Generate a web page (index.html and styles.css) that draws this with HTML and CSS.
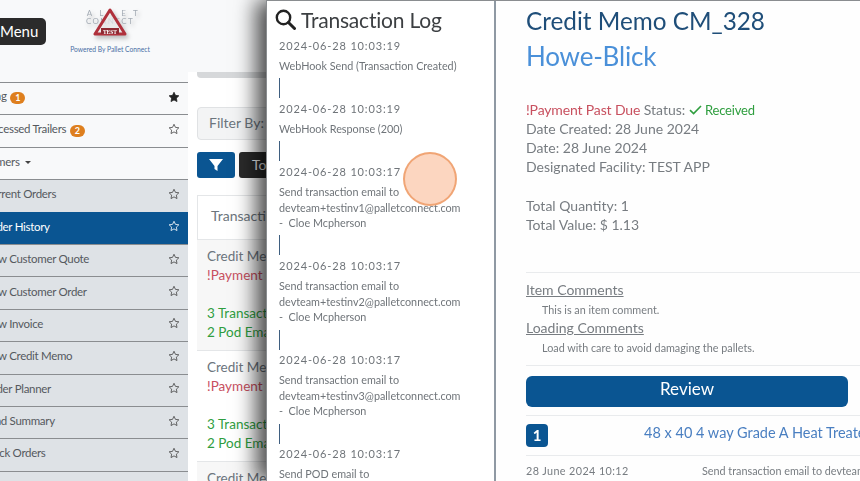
FILE: index.html
```html
<!DOCTYPE html>
<html>
<head>
<meta name="viewport" content="width=device-width, initial-scale=1">
<link rel="stylesheet" href="styles.css">
</head>
<body>

<svg class="defs" width="0" height="0">
  <symbol id="star" viewBox="0 0 24 24">
    <path d="M12 2.5l2.9 6.2 6.8.9-5 4.7 1.3 6.8-6-3.3-6 3.3 1.3-6.8-5-4.7 6.8-.9z"/>
  </symbol>
</svg>

<div class="page">

  <!-- Left column -->
  <div class="side">
    <div class="side-top">
      <div class="menu-btn">Menu</div>
      <div class="logo">
        <svg class="logo-mark" width="60" height="36" viewBox="0 0 60 36">
          <text class="logo-word" x="30" y="12" text-anchor="middle" letter-spacing="7">PALLET</text>
          <text class="logo-word" x="30" y="20" text-anchor="middle" letter-spacing="1.4">CONNECT</text>
          <path d="M30 6L15 30H45Z" fill="rgba(255,255,255,0.55)" stroke="#b0313c" stroke-width="3" stroke-linejoin="round"/>
          <rect x="21" y="24" width="18" height="6" fill="#8f2a33"/>
          <text class="logo-test" x="30" y="29.500" text-anchor="middle">TEST</text>
        </svg>
        <div class="logo-sub">Powered By Pallet Connect</div>
      </div>
    </div>

    <div class="nav">
      <div class="nav-row top"><span class="nav-label">Pending <b class="pill">1</b></span><svg class="star solid"><use href="#star"/></svg></div>
      <div class="nav-row top"><span class="nav-label">Unprocessed Trailers <b class="pill">2</b></span><svg class="star"><use href="#star"/></svg></div>
      <div class="nav-row top"><span class="nav-label">Customers <i class="caret"></i></span></div>
      <div class="nav-row sub"><span class="nav-label">Current Orders</span><svg class="star"><use href="#star"/></svg></div>
      <div class="nav-row sub active"><span class="nav-label">Order History</span><svg class="star"><use href="#star"/></svg></div>
      <div class="nav-row sub"><span class="nav-label">New Customer Quote</span><svg class="star"><use href="#star"/></svg></div>
      <div class="nav-row sub"><span class="nav-label">New Customer Order</span><svg class="star"><use href="#star"/></svg></div>
      <div class="nav-row sub"><span class="nav-label">New Invoice</span><svg class="star"><use href="#star"/></svg></div>
      <div class="nav-row sub"><span class="nav-label">New Credit Memo</span><svg class="star"><use href="#star"/></svg></div>
      <div class="nav-row sub"><span class="nav-label">Order Planner</span><svg class="star"><use href="#star"/></svg></div>
      <div class="nav-row sub"><span class="nav-label">Load Summary</span><svg class="star"><use href="#star"/></svg></div>
      <div class="nav-row sub"><span class="nav-label">Truck Orders</span><svg class="star"><use href="#star"/></svg></div>
      <div class="nav-row sub"></div>
    </div>
  </div>

  <!-- Main column, mostly behind the drawer -->
  <div class="main">
    <div class="main-bar"></div>
    <div class="filter-box">Filter By:</div>
    <div class="filter-btns">
      <div class="btn-blue">
        <svg width="14" height="12" viewBox="0 0 14 12"><path d="M0 0H14L8.5 7V12L5.5 10V7Z" fill="#fff"/></svg>
      </div>
      <div class="btn-dark">Today</div>
    </div>
    <div class="tx-head">Transactions</div>
    <div class="tx-row odd">
      <div>Credit Memo</div>
      <div class="red">!Payment Past Due</div>
      <div class="green first">3 Transactions</div>
      <div class="green">2 Pod Emails</div>
    </div>
    <div class="tx-row">
      <div>Credit Memo</div>
      <div class="red">!Payment Past Due</div>
      <div class="green first">3 Transactions</div>
      <div class="green">2 Pod Emails</div>
    </div>
    <div class="tx-row odd">
      <div>Credit Memo</div>
    </div>
  </div>
</div>

<!-- The drawer -->
<div class="drawer">
  <div class="log">
    <div class="log-title">
      <svg width="21" height="21" viewBox="0 0 21 21"><circle cx="8.5" cy="8.5" r="6.7" fill="none" stroke="#222" stroke-width="2.4"/><path d="M13.5 13.5L19.5 19.5" stroke="#222" stroke-width="3" stroke-linecap="round"/></svg>
      Transaction Log
    </div>
    <div class="log-time">2024-06-28 10:03:19</div>
    <div class="log-text">WebHook Send (Transaction Created)</div>
    <div class="log-bar"></div>
    <div class="log-time">2024-06-28 10:03:19</div>
    <div class="log-text">WebHook Response (200)</div>
    <div class="log-bar"></div>
    <div class="log-time">2024-06-28 10:03:17</div>
    <div class="log-text">Send transaction email to<br>devteam+testinv1@palletconnect.com<br>- &nbsp;Cloe Mcpherson</div>
    <div class="log-bar"></div>
    <div class="log-time">2024-06-28 10:03:17</div>
    <div class="log-text">Send transaction email to<br>devteam+testinv2@palletconnect.com<br>- &nbsp;Cloe Mcpherson</div>
    <div class="log-bar"></div>
    <div class="log-time">2024-06-28 10:03:17</div>
    <div class="log-text">Send transaction email to<br>devteam+testinv3@palletconnect.com<br>- &nbsp;Cloe Mcpherson</div>
    <div class="log-bar"></div>
    <div class="log-time">2024-06-28 10:03:17</div>
    <div class="log-text">Send POD email to</div>
  </div>

  <div class="detail">
    <div class="title">Credit Memo CM_328</div>
    <div class="company">Howe-Blick</div>

    <div class="info">
      <div><span class="red tight">!Payment Past Due</span> Status: <span class="green received"><svg width="13" height="10" viewBox="0 0 13 10"><path d="M1 5.2L4.6 8.6L12 1" fill="none" stroke="#2f9e3f" stroke-width="1.6"/></svg> Received</span></div>
      <div>Date Created: 28 June 2024</div>
      <div>Date: 28 June 2024</div>
      <div>Designated Facility: TEST APP</div>
    </div>
    <div class="info totals">
      <div>Total Quantity: 1</div>
      <div>Total Value: $ 1.13</div>
    </div>

    <hr class="line comments-line">
    <div class="comment-head">Item Comments</div>
    <div class="comment-text">This is an item comment.</div>
    <div class="comment-head">Loading Comments</div>
    <div class="comment-text">Load with care to avoid damaging the pallets.</div>
    <hr class="line review-line">
    <div class="review">Review</div>
    <hr class="line">
    <div class="item">
      <span class="badge">1</span>
      <span class="item-name">48 x 40 4 way Grade A Heat Treated</span>
    </div>
    <hr class="line">
    <div class="event">
      <span class="event-date">28 June 2024 10:12</span>
      <span class="event-text">Send transaction email to devteam+testinv1@palletconnect.com</span>
    </div>
  </div>
</div>

<div class="click-dot"></div>

</body>
</html>
```

FILE: styles.css
```css
html, body {
  margin: 0;
  height: 100%;
  overflow: hidden;
}

body {
  font-family: Lato, "Open Sans", sans-serif;
  background-color: #f8f9fa;
  color: #6c757d;
}

.defs {
  display: block;
  height: 0;
}

.page {
  display: flex;
  height: 481px;
  overflow: hidden;
}

/* Left column */
.side {
  width: 188px;
  flex: none;
  overflow: hidden;
}

.side-top {
  display: flex;
  height: 82px;
  box-sizing: border-box;
  padding-top: 4px;
}

.menu-btn {
  width: 64px;
  height: 27px;
  margin: 14px 0 0 -18px;
  padding-left: 18px;
  box-sizing: border-box;
  flex: none;
  background-color: #2b2b2b;
  border-radius: 5px;
  color: #fff;
  font-size: 15px;
  line-height: 26px;
}

.logo {
  margin-left: 24px;
  text-align: center;
  width: 80px;
}

.logo-mark {
  display: block;
  margin: 0 auto;
  filter: drop-shadow(2px 3px 2px rgba(0,0,0,0.25));
}

.logo-word {
  font-size: 8px;
  fill: #a3abb4;
}

.logo-test {
  font-family: "Liberation Serif", serif;
  font-size: 5.500px;
  font-weight: bold;
  fill: #fff;
}

.logo-sub {
  margin-top: 5px;
  font-size: 6.7px;
  color: #4a6fa5;
  white-space: nowrap;
}

.nav-row {
  display: flex;
  align-items: center;
  justify-content: space-between;
  height: 32.4px;
  box-sizing: border-box;
  padding: 0 8px 4px 0;
  border-top: 1px solid #8a8d90;
  font-size: 11.5px;
  letter-spacing: -0.3px;
  color: #55595e;
  white-space: nowrap;
}

.top .nav-label {
  margin-left: -32px;
}

.sub {
  background-color: #dee2e6;
}

.sub .nav-label {
  margin-left: -16px;
}

.active {
  background-color: #0a5592;
  color: #fff;
  border-top-color: #0a5592;
}

.pill {
  display: inline-block;
  width: 15px;
  height: 12px;
  margin-left: 1px;
  border-radius: 7px;
  background-color: #de7f1e;
  color: #fff;
  font-size: 9px;
  line-height: 12px;
  text-align: center;
  vertical-align: -1px;
}

.caret {
  display: inline-block;
  margin-left: 3px;
  border: 3px solid transparent;
  border-top-color: #444;
  border-bottom-width: 0;
  vertical-align: 2px;
}

.star {
  width: 12px;
  height: 12px;
  fill: none;
  stroke: #444;
  stroke-width: 1.6;
}

.star.solid {
  fill: #222;
  stroke: #222;
}

.active .star {
  stroke: #fff;
}

/* Main column */
.main {
  width: 64px;
  flex: none;
  margin-top: 72px;
  padding: 0 9px;
  overflow: hidden;
  background-color: #fff;
  font-size: 14px;
}

.main-bar {
  height: 6px;
  width: 120px;
  border-radius: 0 0 4px 4px;
  background-color: #d6d8da;
}

.filter-box {
  width: 120px;
  height: 33px;
  margin-top: 29px;
  padding-left: 11px;
  box-sizing: border-box;
  border: 1px solid #e0e2e4;
  border-radius: 4px;
  background-color: #f3f4f5;
  font-size: 14px;
  line-height: 30px;
}

.filter-btns {
  display: flex;
  gap: 4px;
  margin-top: 12px;
}

.btn-blue {
  display: flex;
  flex: none;
  align-items: center;
  justify-content: center;
  width: 38px;
  height: 26px;
  border-radius: 3px;
  background-color: #0a5592;
}

.btn-dark {
  width: 80px;
  flex: none;
  height: 26px;
  padding-left: 13px;
  box-sizing: border-box;
  border-radius: 3px;
  background-color: #2b2b2b;
  color: #fff;
  line-height: 26px;
}

.tx-head {
  width: 120px;
  height: 45px;
  margin-top: 17px;
  padding-left: 13px;
  box-sizing: border-box;
  border: 1px solid #e4e6e8;
  line-height: 40px;
}

.tx-row {
  width: 120px;
  height: 111px;
  padding: 7px 10px 0;
  box-sizing: border-box;
  border-bottom: 1px solid #e4e6e8;
  font-size: 13.5px;
  line-height: 19px;
  white-space: nowrap;
}

.tx-row.odd {
  background-color: #f7f7f7;
}

.first {
  margin-top: 19px;
}

.red {
  color: #c8505f;
}

.green {
  color: #2f9e3f;
}

.tight {
  letter-spacing: -0.15px;
}

.received {
  font-size: 13px;
  letter-spacing: -0.2px;
}

/* The drawer */
.drawer {
  position: fixed;
  top: 0;
  left: 266px;
  right: 0;
  bottom: 0;
  display: flex;
  overflow: hidden;
  background-color: #fff;
  border-top: 1px solid #8a8d90;
  border-left: 1px solid #8a8d90;
  box-shadow: -10px 0 20px rgba(0,0,0,0.7);
}

.log {
  width: 229px;
  flex: none;
  padding: 5px 0 0 12px;
  box-sizing: border-box;
  overflow: hidden;
  border-right: 2px solid #8f99a3;
  font-size: 10.8px;
  color: #6f7479;
}

.log-title {
  display: flex;
  align-items: center;
  gap: 5px;
  margin-left: -4px;
  height: 26px;
  margin-bottom: 7px;
  font-size: 21px;
  letter-spacing: -0.2px;
  color: #3c3f42;
  white-space: nowrap;
}

.log-time {
  height: 14px;
  font-size: 11px;
  line-height: 14px;
  letter-spacing: 0.85px;
}

.log-text {
  margin-top: 5px;
  line-height: 15.6px;
  white-space: nowrap;
}

.log-bar {
  width: 1.2px;
  height: 20px;
  margin: 4.7px 0 3.7px;
  background-color: #3f5f80;
}

.detail {
  flex: 1;
  padding: 5px 0 0 30px;
  min-width: 0;
  overflow: hidden;
  background-color: #fefefe;
}

.title {
  height: 31px;
  font-size: 24.3px;
  line-height: 30px;
  color: #1f4e79;
  white-space: nowrap;
}

.company {
  height: 40px;
  font-size: 26px;
  line-height: 38px;
  letter-spacing: -0.2px;
  color: #4a90d9;
}

.info {
  margin-top: 23px;
  font-size: 14px;
  line-height: 19px;
  color: #777c81;
}

.info div {
  height: 19px;
}

.totals {
  margin-top: 20px;
}

.line {
  margin: 8px 0;
  border: 0;
  border-top: 1px solid #e9ebed;
}

.comments-line {
  margin: 38px 0 8px;
}

.review-line {
  margin: 8px 0 10px;
}

.comment-head {
  font-size: 14px;
  line-height: 18px;
  text-decoration: underline;
  color: #777c81;
}

.comment-text {
  padding: 2px 0 0 16px;
  font-size: 10.8px;
  line-height: 18px;
  color: #777c81;
}

.review {
  width: 322px;
  height: 31px;
  border-radius: 6px;
  background-color: #0a5592;
  color: #fff;
  font-size: 17px;
  line-height: 26px;
  text-align: center;
}

.item {
  display: flex;
  height: 23px;
  white-space: nowrap;
}

.badge {
  width: 22px;
  height: 23px;
  flex: none;
  border-radius: 4px;
  background-color: #0a5592;
  color: #fff;
  font-size: 15px;
  font-weight: bold;
  line-height: 23px;
  text-align: center;
}

.item-name {
  margin-left: 96px;
  font-size: 14.5px;
  line-height: 17px;
  color: #4a7fc1;
}

.event {
  display: flex;
  font-size: 10.8px;
  line-height: 14px;
  white-space: nowrap;
  color: #777c81;
}

.event-date {
  width: 176px;
  flex: none;
  letter-spacing: 0.4px;
}

/* Click marker */
.click-dot {
  position: fixed;
  left: 403px;
  top: 152px;
  width: 54px;
  height: 54px;
  box-sizing: border-box;
  border: 2px solid rgba(240,160,110,0.9);
  border-radius: 50%;
  background-color: rgba(250,180,140,0.55);
}
```
